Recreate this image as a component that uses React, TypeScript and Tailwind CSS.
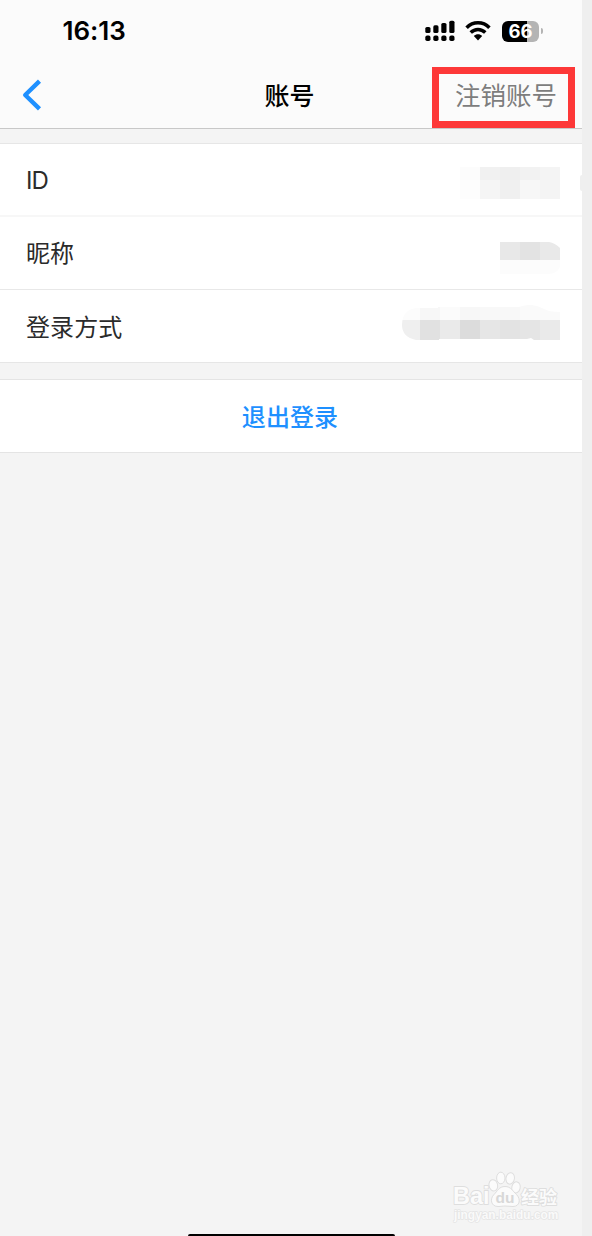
import type { ReactNode } from "react";

interface RowProps {
  label: string;
  className: string;
  labelClass?: string;
  children: ReactNode;
}

// x, y, width, height, fill
type Cell = [number, number, number, number, string];

const idCells: Cell[] = [
  [0, 0, 20, 13, "#fcfcfc"],
  [0, 13, 20, 19, "#fdfdfd"],
  [20, 0, 20, 13, "#f1f1f1"],
  [20, 13, 20, 19, "#f5f5f5"],
  [40, 0, 20, 13, "#efefef"],
  [40, 13, 20, 19, "#f0f0f0"],
  [60, 0, 20, 13, "#f2f2f2"],
  [60, 13, 20, 19, "#f7f7f7"],
  [80, 0, 20, 32, "#f4f4f4"],
];

const nameCells: Cell[] = [
  [0, 0, 20, 18, "#e8e8e8"],
  [20, 0, 20, 18, "#e3e3e3"],
  [40, 0, 20, 18, "#e9e9e9"],
  [0, 18, 60, 14, "#fcfcfc"],
];

const loginCells: Cell[] = [
  [0, 0, 18, 15, "#fcfcfc"],
  [18, 0, 20, 15, "#f7f7f7"],
  [38, 0, 20, 15, "#fbfbfb"],
  [58, 0, 20, 15, "#f7f7f7"],
  [78, 0, 40, 15, "#f8f8f8"],
  [118, 0, 40, 15, "#fafafa"],
  [0, 15, 18, 20, "#efefef"],
  [18, 15, 20, 20, "#e1e1e1"],
  [38, 15, 20, 20, "#eaeaea"],
  [58, 15, 20, 20, "#dcdcdc"],
  [78, 15, 20, 20, "#e6e6e6"],
  [98, 15, 20, 20, "#e3e3e3"],
  [118, 15, 20, 20, "#e5e5e5"],
  [138, 15, 20, 20, "#eaeaea"],
];

function Cells({ cells }: { cells: Cell[] }) {
  return (
    <>
      {cells.map(([x, y, w, h, fill]) => (
        <rect key={`${x}-${y}`} x={x} y={y} width={w} height={h} fill={fill} />
      ))}
    </>
  );
}

function Row({ label, className, labelClass = "pt-[18px] tracking-[0.1px]", children }: RowProps) {
  return (
    <div className={`flex items-start justify-between bg-white pl-[26px] pr-[22px] ${className}`}>
      <span className={`text-[24px] leading-[36px] text-[#2b2b2b] ${labelClass}`}>{label}</span>
      {children}
    </div>
  );
}

function StatusBar() {
  return (
    <div className="flex h-[62px] items-start justify-between pl-[62.5px] pr-[39px]">
      <span className="pt-[15px] font-[Inter] text-[26px] leading-[32px] font-semibold tracking-[-0.05px] text-black">
        16:13
      </span>
      <div className="flex items-center pt-[20px]">
        <svg className="h-[22px] w-[30px]" viewBox="0 0 30 22">
          <rect x="0.3" y="7" width="5.2" height="6" rx="1.6" />
          <rect x="8.3" y="5.3" width="5.2" height="7.7" rx="1.6" />
          <rect x="16.3" y="3" width="5.2" height="10" rx="1.6" />
          <rect x="24.3" y="0.7" width="5.2" height="12.3" rx="1.6" />
          <rect x="0.3" y="15.6" width="5.2" height="5.4" rx="1.8" />
          <rect x="8.3" y="15.6" width="5.2" height="5.4" rx="1.8" />
          <rect x="16.3" y="15.6" width="5.2" height="5.4" rx="1.8" />
          <rect x="24.3" y="15.6" width="5.2" height="5.4" rx="1.8" />
        </svg>
        <svg className="ml-[10px] h-[22px] w-[26px]" viewBox="0 0 26 22" fill="none" stroke="#000" strokeWidth="3.5">
          <path d="M1.6 7.8C8 1.2 18 1.2 24.4 7.8" />
          <path d="M5.7 12.6C10 8.4 16 8.4 20.3 12.6" />
          <path d="M13 20.4L8.8 16.1C11.2 13.6 14.8 13.6 17.2 16.1Z" fill="#000" stroke="none" />
        </svg>
        <div className="ml-[11px] flex h-[21px] w-[37px] items-center justify-center rounded-[6px] bg-linear-to-r from-black from-67% to-[#b4b4b4] to-67%">
          <span className="font-[Inter] text-[18.5px] leading-[21px] font-bold text-white">66</span>
        </div>
        <div className="ml-[2px] h-[6px] w-[2px] rounded-r-full bg-[#b4b4b4]" />
      </div>
    </div>
  );
}

function Header() {
  return (
    <header className="relative h-[129px] border-b border-[#c8c8c8] bg-[#fbfbfb]">
      <StatusBar />
      <div className="grid h-[66px] grid-cols-3 items-center pl-[22px] pr-[25px]">
        <button className="w-5">
          <svg className="h-[32px] w-[20px]" viewBox="0 0 20 32" fill="none" stroke="#1e90ff" strokeWidth="4.4">
            <path d="M17.5 2.2L3.2 16L17.5 29.8" strokeLinejoin="round" />
          </svg>
        </button>
        <h1 className="pb-[2px] text-center text-[25px] leading-[36px] font-medium text-black">账号</h1>
        <button className="pb-[2px] text-right text-[25.5px] leading-[36px] text-[#7d7d7d]">注销账号</button>
      </div>
      <div className="absolute top-[67px] left-[432px] h-[61px] w-[143px] border-[7px] border-[#fd3838]" />
    </header>
  );
}

function Watermark() {
  return (
    <svg
      className="absolute top-[1168px] left-[446px] h-[60px] w-[120px] overflow-visible"
      viewBox="0 0 120 60"
      fill="#fbfbfb"
      stroke="#dedede"
      strokeWidth="1"
    >
      <ellipse cx="47.3" cy="17.3" rx="4.3" ry="5.7" transform="rotate(-12 47.3 17.3)" />
      <ellipse cx="54.8" cy="10" rx="4.2" ry="5.8" />
      <ellipse cx="64.2" cy="10.4" rx="4.2" ry="5.8" transform="rotate(10 64.2 10.4)" />
      <ellipse cx="70" cy="19.4" rx="4.2" ry="5.6" transform="rotate(12 70 19.4)" />
      <path d="M59 18.5C53 18.5 51.5 23 48 26.5C43.5 31 45 38.5 52 38.5C55 38.5 57 38 59 38C62 38 64 38.5 67 38.5C74 38.5 75 31 70.5 26.5C66.5 23 65 18.5 59 18.5Z" />
      <g strokeWidth="1.8" strokeLinejoin="round" fontFamily="'Liberation Sans', sans-serif" fontWeight="700" style={{ paintOrder: "stroke" }}>
        <text x="7" y="36" fontSize="23.5">Bai</text>
        <text x="49.5" y="35" fontSize="15.5" fill="#d8d8d8" stroke="none">du</text>
        <text x="75" y="35.5" fontSize="18" fontFamily="'Noto Sans CJK SC', sans-serif">经验</text>
        <text x="8" y="50.5" fontSize="11.9" fill="#fafafa" stroke="#e4e4e4" strokeWidth="1.4">jingyan.baidu.com</text>
      </g>
    </svg>
  );
}

export default function App() {
  return (
    <div className="flex h-[1236px] w-[592px] overflow-hidden bg-[#efefef] font-['Noto_Sans_CJK_SC',sans-serif]">
      <div className="relative flex w-[582px] flex-col bg-[#f4f4f4]">
        <Header />
        <section className="mt-[14px] border-t border-b border-[#e6e6e6]">
          <Row
            label="ID"
            className="h-[73px] border-b-2 border-[#f7f7f7]"
            labelClass="pt-[19px] font-['Inter'] tracking-[-1px]"
          >
            <svg className="mt-[23px] h-8 w-[100px]" viewBox="0 0 100 32" shapeRendering="crispEdges">
              <Cells cells={idCells} />
            </svg>
          </Row>
          <Row label="昵称" className="h-[73px] border-b border-[#e8e8e8]" labelClass="pt-[17px]">
            <svg className="mt-[25px] h-8 w-[60px]" viewBox="0 0 60 32">
              <clipPath id="name">
                <path d="M0 0H49Q55 1 60 6V25Q57 32 48 32H0Z" />
              </clipPath>
              <g clipPath="url(#name)" shapeRendering="crispEdges">
                <Cells cells={nameCells} />
              </g>
            </svg>
          </Row>
          <Row label="登录方式" className="h-[72px]">
            <svg className="mt-[15px] h-[35px] w-[158px]" viewBox="0 0 158 35">
              <clipPath id="login">
                <path d="M14 3H36V2H117Q130 -3 142 4Q147 7 158 7V35H132L129 33L125 34H37V35H14Q0 32 0 20Q0 5 14 3Z" />
              </clipPath>
              <g clipPath="url(#login)" shapeRendering="crispEdges">
                <Cells cells={loginCells} />
              </g>
            </svg>
          </Row>
        </section>
        <button className="mt-4 h-[74px] border-t border-b border-[#e4e4e4] bg-white pr-[2px] text-center text-[24px] leading-[72px] font-medium tracking-[0.1px] text-[#1e90ff]">
          退出登录
        </button>
        <Watermark />
        <div className="mx-auto mt-auto h-[2px] w-[207px] rounded-t-full bg-black" />
      </div>
      {/* notch on the screen edge */}
      <div className="absolute top-[175px] left-[580px] h-4 w-[2px] rounded-l-sm bg-[#efefef]" />
    </div>
  );
}
